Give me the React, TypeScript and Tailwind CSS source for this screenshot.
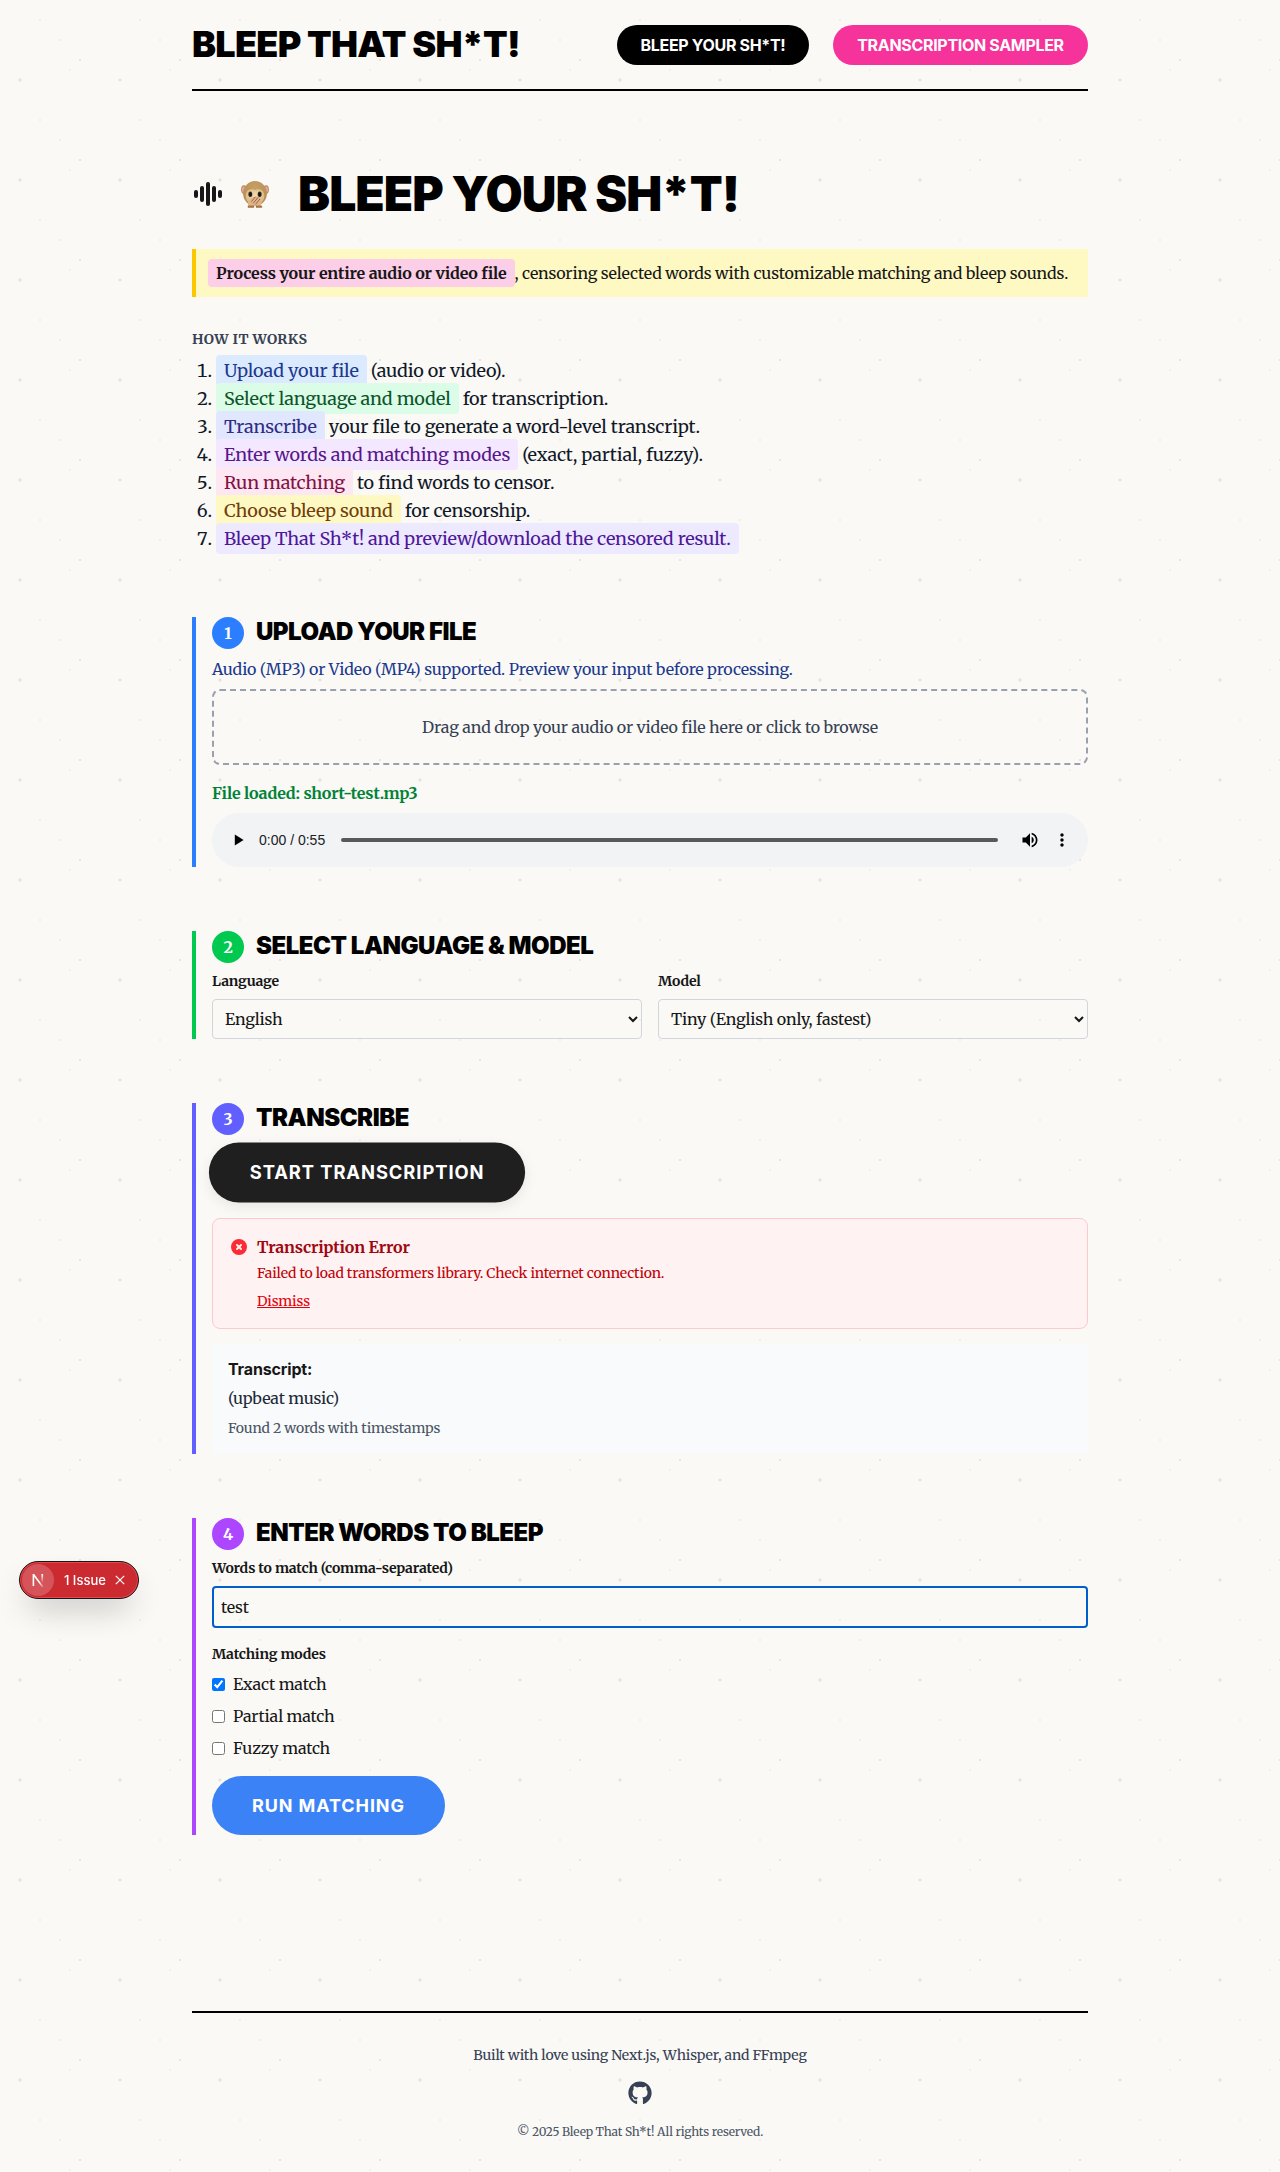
import type { ReactNode } from 'react';
import { FaGithub } from 'react-icons/fa';

const display = 'font-[Inter,sans-serif] tracking-[-0.02em]';

function WaveIcon() {
  return (
    <svg width="32" height="32" viewBox="0 0 32 32" className="text-[#171717]" fill="currentColor">
      <rect x="2" y="12" width="4" height="8" rx="2" />
      <rect x="8" y="8" width="4" height="16" rx="2" />
      <rect x="14" y="4" width="4" height="24" rx="2" />
      <rect x="20" y="8" width="4" height="16" rx="2" />
      <rect x="26" y="12" width="4" height="8" rx="2" />
    </svg>
  );
}

function MonkeyIcon() {
  return (
    <svg width="28" height="28" viewBox="0 0 28 28">
      <defs>
        <radialGradient id="fur" cx="50%" cy="28%" r="70%">
          <stop offset="0" stopColor="#c6a066" />
          <stop offset="1" stopColor="#b38c50" />
        </radialGradient>
        <radialGradient id="skin" cx="50%" cy="40%" r="60%">
          <stop offset="0" stopColor="#f3dcb4" />
          <stop offset="1" stopColor="#d9b57c" />
        </radialGradient>
      </defs>
      <ellipse cx="2.9" cy="9.6" rx="2.8" ry="4.4" fill="#b48c50" />
      <ellipse cx="25.1" cy="9.6" rx="2.8" ry="4.4" fill="#b48c50" />
      <ellipse cx="2.7" cy="9.8" rx="1.6" ry="3.2" fill="#f0a3b0" />
      <ellipse cx="25.3" cy="9.8" rx="1.6" ry="3.2" fill="#f0a3b0" />
      <ellipse cx="14" cy="13.4" rx="11.9" ry="12.4" fill="url(#fur)" />
      <path d="M14 10.4C12.2 8.4 5 8.8 4.8 15 4 20.8 8.8 25 14 25s10-4.2 9.2-10C23 8.8 15.8 8.4 14 10.4Z" fill="url(#skin)" />
      <ellipse cx="9.3" cy="14.2" rx="2" ry="2.8" fill="#4a3d30" />
      <ellipse cx="18.7" cy="14.2" rx="2" ry="2.8" fill="#4a3d30" />
      <ellipse cx="9.4" cy="14.2" rx="1.3" ry="2" fill="#15120f" />
      <ellipse cx="18.6" cy="14.2" rx="1.3" ry="2" fill="#15120f" />
      <path d="M7 27v-3.4c0-3 4-6.4 7-7.2 2-.5 4.6.6 6 2.6 1.2 1.8.8 3.4-.4 5L21 27h-6l-1-1.8-1 1.8Z" fill="#e2b48c" />
      <path d="M6.8 27.8v-2l6.2-.2v2.2ZM15 27.8v-2.2l6 .2.2 2Z" fill="#a0763f" />
      <path d="m10.6 21.4 3.4-4.2M12.4 23l4.6-5.4M14.8 24l4-4.8" stroke="#8f5f3c" strokeWidth=".9" strokeLinecap="round" fill="none" />
    </svg>
  );
}

function Pill({ className, children }: { className: string; children: ReactNode }) {
  return <span className={`rounded px-2 py-1 ${className}`}>{children}</span>;
}

function Section({ n, title, border, dot, children }: { n: number; title: string; border: string; dot: string; children: ReactNode }) {
  return (
    <section className={`mt-16 border-l-4 pl-4 ${border}`}>
      <div className="mb-2 flex h-8 items-start gap-3">
        <span className={`flex size-8 items-center justify-center rounded-full font-bold text-white ${dot}`}>{n}</span>
        <h2 className={`pt-[2px] text-[24px] leading-[26.4px] font-black text-black ${display}`}>{title}</h2>
      </div>
      {children}
    </section>
  );
}

function Player() {
  return (
    <div className="mt-2 flex h-[54px] items-center rounded-full bg-[#f1f3f4] pr-4 pl-[17px] font-['Liberation_Sans',sans-serif] tracking-normal">
      <svg width="24" height="24" viewBox="0 0 24 24"><path d="M8 5v14l11-7z" transform="translate(-.6 2.4) scale(.8)" /></svg>
      <span className="ml-[6px] w-[82px] text-[14px] leading-5 text-[#202124]">0:00 / 0:55</span>
      <span className="h-1 flex-1 rounded-full bg-[#58595b]" />
      <svg className="ml-[22px]" width="20" height="20" viewBox="0 0 24 24">
        <path d="M3 9v6h4l5 5V4L7 9H3zm13.5 3c0-1.77-1.02-3.29-2.5-4.03v8.05c1.48-.73 2.5-2.25 2.5-4.02zM14 3.23v2.06c2.89.86 5 3.54 5 6.71s-2.11 5.85-5 6.71v2.06c4.01-.91 7-4.49 7-8.77s-2.99-7.86-7-8.77z" />
      </svg>
      <svg className="ml-3" width="20" height="20" viewBox="0 0 24 24">
        <path d="M12 8c1.1 0 2-.9 2-2s-.9-2-2-2-2 .9-2 2 .9 2 2 2zm0 2c-1.1 0-2 .9-2 2s.9 2 2 2 2-.9 2-2-.9-2-2-2zm0 6c-1.1 0-2 .9-2 2s.9 2 2 2 2-.9 2-2-.9-2-2-2z" />
      </svg>
    </div>
  );
}

function IssueBadge() {
  return (
    <div className="fixed top-[1561px] left-[19px] flex h-[38px] w-[120px] items-center rounded-full border border-[#171717] bg-[#ca2a30] pl-[2px] font-[Inter,sans-serif] tracking-normal text-white shadow-[inset_0_0_0_1px_#e5484d,0_16px_32px_-8px_rgba(0,0,0,0.24)]">
      <span className="flex size-8 items-center justify-center rounded-full bg-white/20">
        <svg width="14" height="14" viewBox="0 0 14 14" fill="none">
          <defs>
            <linearGradient id="stem" x1="0" y1="0" x2="0" y2="1"><stop offset="0" stopColor="#fff" /><stop offset="1" stopColor="#fff" stopOpacity="0" /></linearGradient>
            <linearGradient id="slash" x1="0" y1="0" x2="1" y2="1"><stop offset=".6" stopColor="#fff" /><stop offset="1" stopColor="#fff" stopOpacity="0.1" /></linearGradient>
          </defs>
          <path d="M1.6 13V1h1.6l9.6 13h-2L3.2 3.8V13Z" fill="url(#slash)" />
          <rect x="10.4" y="1" width="1.7" height="9" fill="url(#stem)" />
        </svg>
      </span>
      <span className="ml-[10px] text-[13px] font-medium">1 Issue</span>
      <svg className="ml-[9px]" width="10" height="10" viewBox="0 0 10 10" stroke="#fff" strokeWidth="1.2"><path d="m.8.8 8.4 8.4M9.2.8.8 9.2" /></svg>
    </div>
  );
}

const steps: [string, string, string][] = [
  ['Upload your file', 'bg-blue-100 text-blue-900', ' (audio or video).'],
  ['Select language and model', 'bg-green-100 text-green-900', ' for transcription.'],
  ['Transcribe', 'bg-indigo-100 text-indigo-900', ' your file to generate a word-level transcript.'],
  ['Enter words and matching modes', 'bg-purple-100 text-purple-900', ' (exact, partial, fuzzy).'],
  ['Run matching', 'bg-pink-100 text-pink-900', ' to find words to censor.'],
  ['Choose bleep sound', 'bg-yellow-100 text-yellow-900', ' for censorship.'],
  ['Bleep That Sh*t! and preview/download the censored result.', 'bg-violet-100 text-violet-900', ''],
];

const button = 'h-[59px] rounded-full px-10 font-[Inter,sans-serif] text-[18px] leading-[27px] font-bold tracking-wider text-white';
const select = 'h-10 w-full rounded border border-gray-300 p-2';
const navLink = 'flex h-10 items-center justify-center rounded-full';

export default function App() {
  return (
    <div className="h-[2172px] bg-[#faf9f6] bg-[radial-gradient(circle_at_20px_80px,rgba(0,0,0,0.09)_1px,transparent_2px),radial-gradient(circle_at_80px_60px,rgba(0,0,0,0.08)_1px,transparent_1px),radial-gradient(circle_at_40px_20px,rgba(0,0,0,0.04)_1px,transparent_1px),radial-gradient(circle_at_60px_40px,rgba(0,0,0,0.04)_1px,transparent_1px),radial-gradient(circle_at_70px_70px,rgba(0,0,0,0.03)_1px,transparent_1px)] bg-[size:100px_100px] font-[Merriweather,'DejaVu_Serif_Condensed',serif] text-[16px] leading-6 tracking-[-0.16px] text-[#171717]">
      <div className="mx-auto w-[896px]">
        <header className="flex h-[91px] items-start justify-between border-b-2 border-black pt-[25px]">
          <div className={`text-[36px] leading-[39.6px] font-black text-black ${display}`}>BLEEP THAT SH*T!</div>
          <nav className={`flex gap-6 font-bold text-white ${display}`}>
            <a className={`w-[192px] bg-black ${navLink}`}>BLEEP YOUR SH*T!</a>
            <a className={`w-[255px] bg-[#f6339a] ${navLink}`}>TRANSCRIPTION SAMPLER</a>
          </nav>
        </header>

        <main>
          <div className="mt-[77px] flex h-[52.8px] items-center">
            <WaveIcon />
            <span className="ml-[17px]"><MonkeyIcon /></span>
            <h1 className="ml-[29px] font-[Inter,sans-serif] text-[48px] leading-[52.8px] font-black tracking-[-0.92px] text-black">BLEEP YOUR SH*T!</h1>
          </div>
          <p className="mt-[28.2px] border-l-4 border-[#fdc700] bg-[#fef9c2] p-3 whitespace-nowrap">
            <Pill className="bg-[#fccee8] font-bold">Process your entire audio or video file</Pill>, censoring selected words with customizable matching and bleep sounds.
          </p>

          <p className="mt-8 text-[14px] leading-5 font-bold tracking-wide text-gray-700">HOW IT WORKS</p>
          <ol className="mt-2 list-decimal pl-6 text-[18px] leading-7 text-gray-900">
            {steps.map(([label, tone, rest]) => (
              <li key={label}><Pill className={tone}>{label}</Pill>{rest}</li>
            ))}
          </ol>

          <Section n={1} title="UPLOAD YOUR FILE" border="border-[#2b7fff]" dot="bg-[#2b7fff]">
            <p className="mb-2 text-blue-900">Audio (MP3) or Video (MP4) supported. Preview your input before processing.</p>
            <div className="rounded-lg border-2 border-dashed border-gray-400 p-6 text-center text-gray-700">
              Drag and drop your audio or video file here or click to browse
            </div>
            <p className="mt-4 font-bold text-green-700">File loaded: short-test.mp3</p>
            <Player />
          </Section>

          <Section n={2} title="SELECT LANGUAGE & MODEL" border="border-[#00c950]" dot="bg-[#00c950]">
            <div className="grid grid-cols-2 gap-4">
              <label className="block">
                <span className="mb-2 block text-[14px] leading-5 font-bold">Language</span>
                <select className={select}><option>English</option></select>
              </label>
              <label className="block">
                <span className="mb-2 block text-[14px] leading-5 font-bold">Model</span>
                <select className={select}><option>Tiny (English only, fastest)</option></select>
              </label>
            </div>
          </Section>

          <Section n={3} title="TRANSCRIBE" border="border-[#615fff]" dot="bg-[#615fff]">
            <button className={`block scale-[1.02] bg-[#1f1f1f] shadow-[0_4px_12px_rgba(0,0,0,0.08)] ${button}`}>START TRANSCRIPTION</button>
            <div className="mt-4 flex h-[111px] rounded-lg border border-[#ffc9c9] bg-[#fef2f2] p-4">
              <svg className="mt-[2px]" width="20" height="20" viewBox="0 0 20 20" fill="#fb2c36">
                <path fillRule="evenodd" clipRule="evenodd" d="M10 18a8 8 0 100-16 8 8 0 000 16zM8.707 7.293a1 1 0 00-1.414 1.414L8.586 10l-1.293 1.293a1 1 0 101.414 1.414L10 11.414l1.293 1.293a1 1 0 001.414-1.414L11.414 10l1.293-1.293a1 1 0 00-1.414-1.414L10 8.586 8.707 7.293z" />
              </svg>
              <div className="ml-2">
                <p className="font-bold text-[#9f0712]">Transcription Error</p>
                <p className="mt-1 text-[14px] leading-5 text-[#c10007]">Failed to load transformers library. Check internet connection.</p>
                <button className="mt-2 block text-[14px] leading-5 text-[#e7000b] underline">Dismiss</button>
              </div>
            </div>
            <div className="mt-4 h-[109.4px] bg-[#f9fafb] p-4">
              <h3 className="mb-[7px] font-[Inter,sans-serif] leading-[17.6px] font-bold">Transcript:</h3>
              <p className="text-gray-800">(upbeat music)</p>
              <p className="mt-2 text-[14px] leading-5 text-gray-600">Found 2 words with timestamps</p>
            </div>
          </Section>

          <Section n={4} title="ENTER WORDS TO BLEEP" border="border-[#ad46ff]" dot="bg-[#ad46ff]">
            <p className="mb-2 text-[14px] leading-5 font-bold">Words to match (comma-separated)</p>
            <input className="block h-[42px] w-full rounded border-2 border-[#005fcc] px-[7px] outline-none" defaultValue="test" />
            <p className="mt-4 mb-2 text-[14px] leading-5 font-bold">Matching modes</p>
            <div className="flex flex-col gap-2">
              {['Exact match', 'Partial match', 'Fuzzy match'].map((m, i) => (
                <label key={m} className="flex items-center gap-2"><input type="checkbox" defaultChecked={i === 0} />{m}</label>
              ))}
            </div>
            <button className={`mt-4 block bg-[#3b82f6] ${button}`}>RUN MATCHING</button>
          </Section>
        </main>

        <footer className="mt-[175.6px] flex flex-col items-center border-t-2 border-black pt-8 text-gray-700">
          <p className="text-[14px] leading-5">Built with love using Next.js, Whisper, and FFmpeg</p>
          <FaGithub className="mt-4 size-6" />
          <p className="mt-[19px] text-[12px] leading-4 text-gray-600">© 2025 Bleep That Sh*t! All rights reserved.</p>
        </footer>
      </div>
      <IssueBadge />
    </div>
  );
}
